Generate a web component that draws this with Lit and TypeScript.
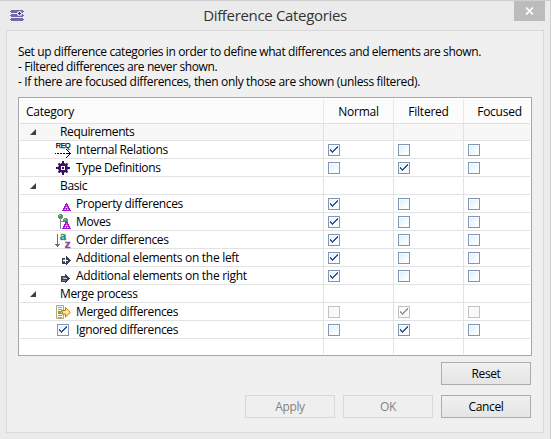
import { LitElement, html, svg, css, nothing } from "lit";
import { customElement, property } from "lit/decorators.js";
import { classMap } from "lit/directives/class-map.js";

interface Row {
  label: string;
  icon?: string;
  checks?: boolean[];
  disabled?: boolean;
}

const rows: Row[] = [
  { label: "Requirements" },
  { label: "Internal Relations", icon: "req", checks: [true, false, false] },
  { label: "Type Definitions", icon: "gear", checks: [false, true, false] },
  { label: "Basic" },
  { label: "Property differences", icon: "delta", checks: [true, false, false] },
  { label: "Moves", icon: "move", checks: [true, false, false] },
  { label: "Order differences", icon: "order", checks: [true, false, false] },
  { label: "Additional elements on the left", icon: "plus", checks: [true, false, false] },
  { label: "Additional elements on the right", icon: "minus", checks: [true, false, false] },
  { label: "Merge process" },
  { label: "Merged differences", icon: "merged", checks: [false, true, false], disabled: true },
  { label: "Ignored differences", icon: "check", checks: [false, true, false] },
];

const delta = svg`
  <path d="M11 8h1v1h1v2h1v2h1v2h1v1H7v-1h1v-2h1v-2h1V9h1z" fill="#a012d8"/>
  <path d="M11 10h1v2h1v2h1v1h-2v-2h-1v2H9v-1h1v-2h1z" fill="#f2559f"/>
  <path d="M11 12h1v1h-1zM10 14h1v1h-1zM12 14h1v1h-1z" fill="#fff"/>`;

const icons: Record<string, unknown> = {
  req: svg`
    <text x="0.800" y="7.200" textLength="14.500" lengthAdjust="spacingAndGlyphs" font-family="Liberation Sans" font-size="7" fill="#000" stroke="#000" stroke-width=".25">REQ</text>
    <path d="M0 12h1v1H0zM2 12h2v1H2zM5 12h2v1H5zM8 12h2v1H8zM11 12h4v1h-4z
      M11 8h1v1h-1zM12 9h1v1h-1zM13 10h1v1h-1zM14 11h1v1h-1zM15 12h1v1h-1zM14 13h1v1h-1zM13 14h1v1h-1zM12 15h1v1h-1zM11 16h1v1h-1z" fill="#000"/>`,
  gear: svg`<g shape-rendering="geometricPrecision">
    <path d="M8 2v14M1 9h14" stroke="#35105f" stroke-width="2"/>
    <path d="M3.500 4.500l9 9M12.500 4.500l-9 9" stroke="#35105f" stroke-width="2"/>
    <circle cx="8" cy="9" r="4.900" fill="#35105f"/></g>
    <path d="M6 7h4v4H6z" fill="#fff"/><path d="M7 8h2v2H7z" fill="#35105f"/>`,
  delta,
  move: svg`
    <path d="M5 5h1v11H5zM6 8h4v1H6z" fill="#7d8790"/>
    <path d="M4 1h3v1h1v3H7v1H4V5H3V2h1zM9 5h3v1h1v3H9V8H8V6h1z" fill="#4f9b68"/>
    <path d="M4 2h2v1H4zM9 6h2v1H9z" fill="#82c293"/>
    ${delta}`,
  order: svg`
    <path d="M2 3h1v13H2zM0 13h1v1H0zM1 13h1v2H1zM3 13h1v2H3zM4 13h1v1H4z" fill="#66707c"/>
    <text x="4.800" y="8.500" font-family="Liberation Serif" font-size="13" font-weight="700" fill="#2d8b80" stroke="#2d8b80" stroke-width=".4">a</text>
    <text x="9.800" y="16.500" font-family="Liberation Sans" font-size="11.500" font-weight="700" fill="#8f479e" stroke="#8f479e" stroke-width=".5">z</text>`,
  plus: svg`
    <path d="M7 9h4V7h1v1h1v1h1v1h1v1h1v1h-1v1h-1v1h-1v1h-1v1h-1v-1H7z" fill="#384153"/>
    <path d="M8 11h2V9h1v2h2v1h-2v2h-1v-2H8z" fill="#fff"/><path d="M8 10h2v1H8zM8 12h2v1H8z" fill="#737d8e"/>`,
  minus: svg`
    <path d="M6 9h4V7h1v1h1v1h1v1h1v1h1v1h-1v1h-1v1h-1v1h-1v1h-1v-1H6z" fill="#384153"/>
    <path d="M7 10h4v1H7zM7 13h4v1H7z" fill="#68748a"/><path d="M8 11h4v1H8z" fill="#c3cbd8"/>`,
  merged: svg`<g shape-rendering="geometricPrecision">
    <path d="M1.500 2.500h7v13h-7z" fill="#f3f6fa" stroke="#b5a878"/>
    <path d="M3 4h4v1H3zM3 6h4v1H3zM3 12h4v1H3zM3 14h4v1H3z" fill="#8ba4cc"/>
    <path d="M3 8h3v3H3z" fill="#7ea65b"/>
    <path d="M6.500 7.500h4v-3l5 4.800-5 4.700v-3h-4v-1h1v-1.500h-1z" fill="#ffe89a" stroke="#ba8111"/></g>`,
};

@customElement("check-box")
class CheckBox extends LitElement {
  @property({ type: Boolean }) checked = false;
  @property({ type: Boolean }) disabled = false;

  static styles = css`
    :host { display: block; width: 12px; height: 12px; }
    .box {
      box-sizing: border-box; width: 12px; height: 12px;
      border: 1px solid #8295b3;
      background: linear-gradient(135deg, #d9effc, #fff 85%);
      box-shadow: inset 0 0 0 1px #f7fcff;
    }
    .off { border-color: #c0c0c0; background: #f8f8f8; }
    svg { display: block; width: 10px; height: 10px; }
    .mark { fill: #3c4f80; }
    .off .mark { fill: #94949c; }
  `;

  render() {
    return html`<div class=${classMap({ box: true, off: this.disabled })}>
      ${this.checked
        ? html`<svg viewBox="0 0 10 10" shape-rendering="crispEdges">
            <path class="mark" d="M8 1h1v2H8v1H7v1H6v1H5v1H4v1H3V7H2V6H1V4h1v1h1v1h1V5h1V4h1V3h1V2h1z"/></svg>`
        : nothing}
    </div>`;
  }
}

@customElement("app-root")
class AppRoot extends LitElement {
  static styles = css`
    :host {
      display: block; width: 551px; height: 439px; overflow: hidden;
      font-family: "Open Sans", "Noto Sans", sans-serif;
      font-size: 12px; color: #000; letter-spacing: -0.36px;
    }
    * { box-sizing: border-box; }
    .window {
      height: 439px; background: #ebebeb; display: flex; flex-direction: column;
      border-top: 1px solid #d0d0d0; border-right: 1px solid #d0d0d0; padding: 0 6px 6px;
    }
    .titlebar { height: 29px; display: grid; grid-template-columns: 30px 1fr 30px; align-items: start; }
    .logo { width: 16px; height: 16px; margin: 7px 0 0 3px; }
    .title { text-align: center; font-size: 15px; line-height: 28px; height: 29px; color: #333; letter-spacing: -0.33px; }
    .close { width: 31px; height: 20px; background: #bcbcbc; display: grid; place-items: center; }
    .close svg { width: 9px; height: 8px; }
    .client {
      flex: 1; border: 1px solid #d9d9d9; background: #f0f0f0;
      padding: 13px 11px 0; display: flex; flex-direction: column;
    }
    .intro { line-height: 15px; height: 53px; white-space: nowrap; letter-spacing: -0.385px; }
    .intro .focus { letter-spacing: -0.335px; }
    .tree {
      border: 1px solid #a3a7ad; background: #fff; padding: 1px; width: 514px; height: 259px;
      display: flex; flex-direction: column;
    }
    .row {
      display: grid; grid-template-columns: 304px 70px 70px 66px; grid-template-rows: 100%;
      height: 18px; border-bottom: 1px solid #e2e2e2; flex: none;
    }
    .cell { border-right: 1px solid #e2e2e2; display: flex; align-items: center; min-width: 0; }
    .cell:last-child { border-right: 0; }
    .head { height: 25px; background: #fcfcfd; border-bottom-color: #e0e0e0; }
    .head .cell { justify-content: center; border-color: #e2ebf5; padding-top: 1px; }
    .head .cell:first-child { justify-content: flex-start; padding-left: 6px; }
    .head .cell:last-child { padding-left: 5px; }
    .head .label { letter-spacing: -0.25px; }
    .group.first { background: #f7f7f7; height: 17px; }
    .group.first .label { margin-top: -1px; }
    .filler { flex: 1; height: auto; border-bottom: 0; }
    .label { line-height: 17px; white-space: nowrap; }
    .long { letter-spacing: -0.29px; }
    .twisty { width: 6px; height: 6px; margin: 0 24px 0 10px; }
    .icon { width: 18px; height: 18px; margin: 0 3px -2px 35px; flex: none; align-self: flex-start; overflow: visible; }
    .iconcheck { margin: 3px 7px 0 37px; align-self: flex-start; }
    .value { padding: 3px 0 0 4px; align-items: flex-start; }
    .buttons { display: flex; flex-direction: column; align-items: flex-end; gap: 10px; padding-top: 6px; width: 513px; }
    .line { display: flex; gap: 8px; }
    .button {
      font: inherit; letter-spacing: inherit; width: 90px; height: 23px; padding: 0 0 1px; color: #000;
      border: 1px solid #acacac; background: linear-gradient(#f0f0f0, #e5e5e5);
    }
    .button:disabled { border-color: #d9d9d9; background: #efefef; color: #838383; }
  `;

  private renderIcon(name: string) {
    if (name === "check") return html`<check-box class="iconcheck" checked></check-box>`;
    return html`<svg class="icon" viewBox="0 0 18 18" shape-rendering="crispEdges">${icons[name]}</svg>`;
  }

  private renderRow(row: Row, index: number) {
    return html`<div class=${classMap({ row: true, group: !row.icon, first: index === 0 })}>
      <div class="cell">
        ${row.icon
          ? this.renderIcon(row.icon)
          : html`<svg class="twisty" viewBox="0 0 6 6"><path d="M6 0v6H0z" fill="#404040"/></svg>`}
        <span class=${classMap({ label: true, long: row.label.length > 25 })}>${row.label}</span>
      </div>
      ${[0, 1, 2].map(
        (i) => html`<div class="cell value">
          ${row.checks
            ? html`<check-box ?checked=${row.checks[i]} ?disabled=${!!row.disabled}></check-box>`
            : nothing}
        </div>`
      )}
    </div>`;
  }

  render() {
    return html`<div class="window">
      <div class="titlebar">
        <svg class="logo" viewBox="0 0 16 16">
          <path d="M2 2h12v1h1v1h-1v1H2V4H1V3h1zM2 6h12v1h1v1h-1v1H2V8H1V7h1zM2 10h12v1h1v1h-1v1H2v-1H1v-1h1z" fill="#7568a6"/>
          <circle cx="10.500" cy="5.500" r="2.500" fill="#e6e2f2"/>
          <path d="M10 4h1v1h1v1h-1v1h-1V6H9V5h1z" fill="#352a66"/>
        </svg>
        <div class="title">Difference Categories</div>
        <div class="close"><svg viewBox="0 0 9 8"><path d="M1 .5l7 7M8 .5l-7 7" stroke="#fff" stroke-width="1.700"/></svg></div>
      </div>
      <div class="client">
        <div class="intro">
          <div>Set up difference categories in order to define what differences and elements are shown.</div>
          <div>- Filtered differences are never shown.</div>
          <div class="focus">- If there are focused differences, then only those are shown (unless filtered).</div>
        </div>
        <div class="tree">
          <div class="row head">
            ${["Category", "Normal", "Filtered", "Focused"].map((t) => html`<div class="cell"><span class="label">${t}</span></div>`)}
          </div>
          ${rows.map((row, i) => this.renderRow(row, i))}
          <div class="row filler">${[0, 1, 2, 3].map(() => html`<div class="cell"></div>`)}</div>
        </div>
        <div class="buttons">
          <div class="line"><button class="button">Reset</button></div>
          <div class="line">
            <button class="button" disabled>Apply</button>
            <button class="button" disabled>OK</button>
            <button class="button">Cancel</button>
          </div>
        </div>
      </div>
    </div>`;
  }
}
